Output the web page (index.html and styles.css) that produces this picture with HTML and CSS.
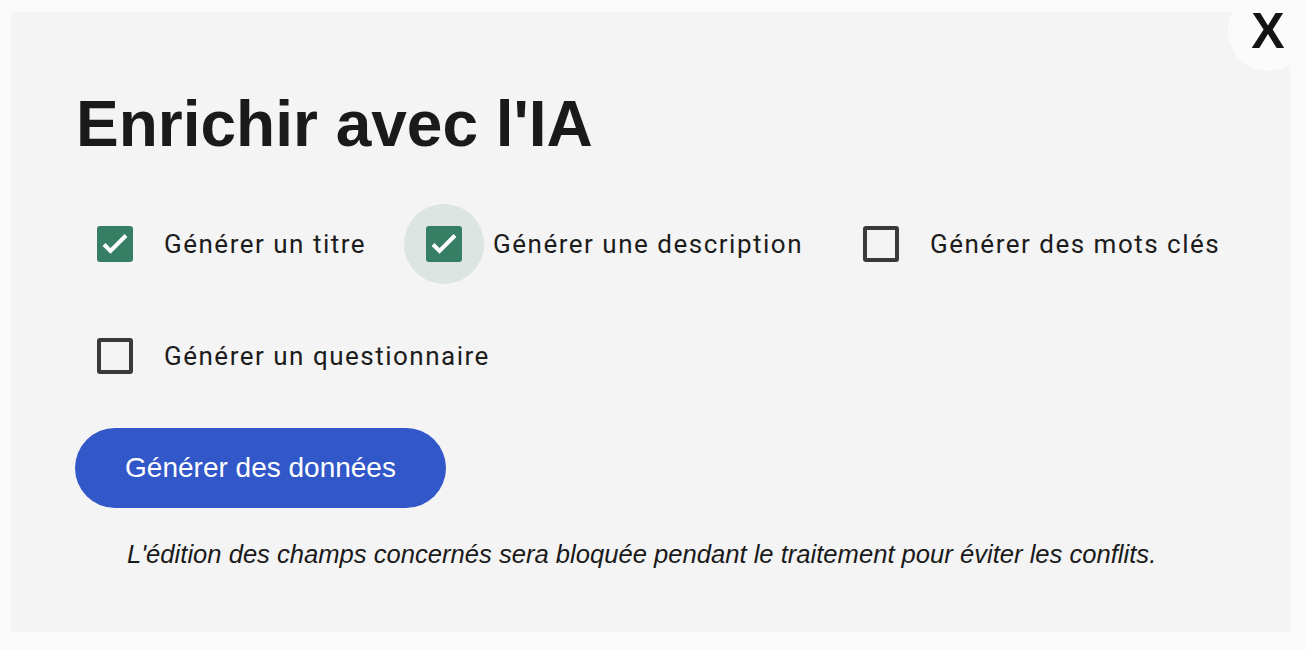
FILE: index.html
```html
<!DOCTYPE html>
<html lang="fr">
<head>
<meta charset="utf-8">
<title>Enrichir avec l'IA</title>
<link rel="stylesheet" href="styles.css">
</head>
<body>
<div class="panel">
  <button class="close" type="button" aria-label="Fermer">X</button>
  <h1 class="title">Enrichir avec l'IA</h1>
  <div class="options">
    <label class="option">
      <span class="box-wrap"><span class="box checked"><svg viewBox="0 0 36 36" width="36" height="36"><path d="M7 18.5 L13.5 25 L29 9.5" fill="none" stroke="#fff" stroke-width="4"/></svg></span></span>
      <span class="label">Générer un titre</span>
    </label>
    <label class="option">
      <span class="box-wrap focus"><span class="box checked"><svg viewBox="0 0 36 36" width="36" height="36"><path d="M7 18.5 L13.5 25 L29 9.5" fill="none" stroke="#fff" stroke-width="4"/></svg></span></span>
      <span class="label">Générer une description</span>
    </label>
    <label class="option">
      <span class="box-wrap"><span class="box"></span></span>
      <span class="label">Générer des mots clés</span>
    </label>
    <label class="option">
      <span class="box-wrap"><span class="box"></span></span>
      <span class="label">Générer un questionnaire</span>
    </label>
  </div>
  <button class="generate" type="button">Générer des données</button>
  <p class="note">L'édition des champs concernés sera bloquée pendant le traitement pour éviter les conflits.</p>
</div>
</body>
</html>
```
FILE: styles.css
```css
html, body {
  margin: 0;
  padding: 0;
  background: #fafafa;
}
body {
  font-family: "Liberation Sans", Arial, sans-serif;
  color: #1a1a1a;
}
.panel {
  position: relative;
  box-sizing: border-box;
  width: 1279px;
  height: 620px;
  margin: 12px 0 0 11px;
  padding: 80px 64px 0 64px;
  background: #f4f4f4;
}
.close {
  position: absolute;
  top: -21px;
  right: -18px;
  width: 80px;
  height: 80px;
  border: 0;
  border-radius: 50%;
  background: #fbfbfb;
  font-family: "Liberation Sans", Arial, sans-serif;
  font-weight: bold;
  font-size: 50px;
  line-height: 80px;
  color: #141414;
  padding: 0;
  text-align: center;
  cursor: pointer;
}
.title {
  margin: 0 0 0 1px;
  font-size: 64px;
  line-height: 64px;
  font-weight: bold;
  color: #1a1a1a;
}
.options {
  display: flex;
  flex-wrap: wrap;
  column-gap: 38px;
  row-gap: 32px;
  margin-top: 48px;
}
.option {
  display: flex;
  align-items: center;
  height: 80px;
}
.box-wrap {
  width: 80px;
  height: 80px;
  border-radius: 50%;
  display: flex;
  align-items: center;
  justify-content: center;
  flex: none;
}
.box-wrap.focus {
  background: #dde5e2;
}
.box {
  box-sizing: border-box;
  width: 36px;
  height: 36px;
  border: 4px solid #3a3a3a;
  border-radius: 3px;
  display: block;
}
.box.checked {
  border: 0;
  background: #377f64;
}
.box svg {
  display: block;
}
.label {
  margin-left: 9px;
  font-family: Roboto, "Liberation Sans", sans-serif;
  font-size: 26px;
  letter-spacing: 1.5px;
  color: #1c1c1c;
}
.generate {
  display: block;
  margin-top: 32px;
  height: 80px;
  width: 371px;
  border: 0;
  border-radius: 40px;
  background: #3257c8;
  color: #fff;
  font-family: "Liberation Sans", Arial, sans-serif;
  font-size: 28px;
  padding: 0;
  cursor: pointer;
}
.note {
  margin: 32px 0 0 52px;
  font-size: 25.6px;
  font-style: italic;
  color: #1a1a1a;
}
```
